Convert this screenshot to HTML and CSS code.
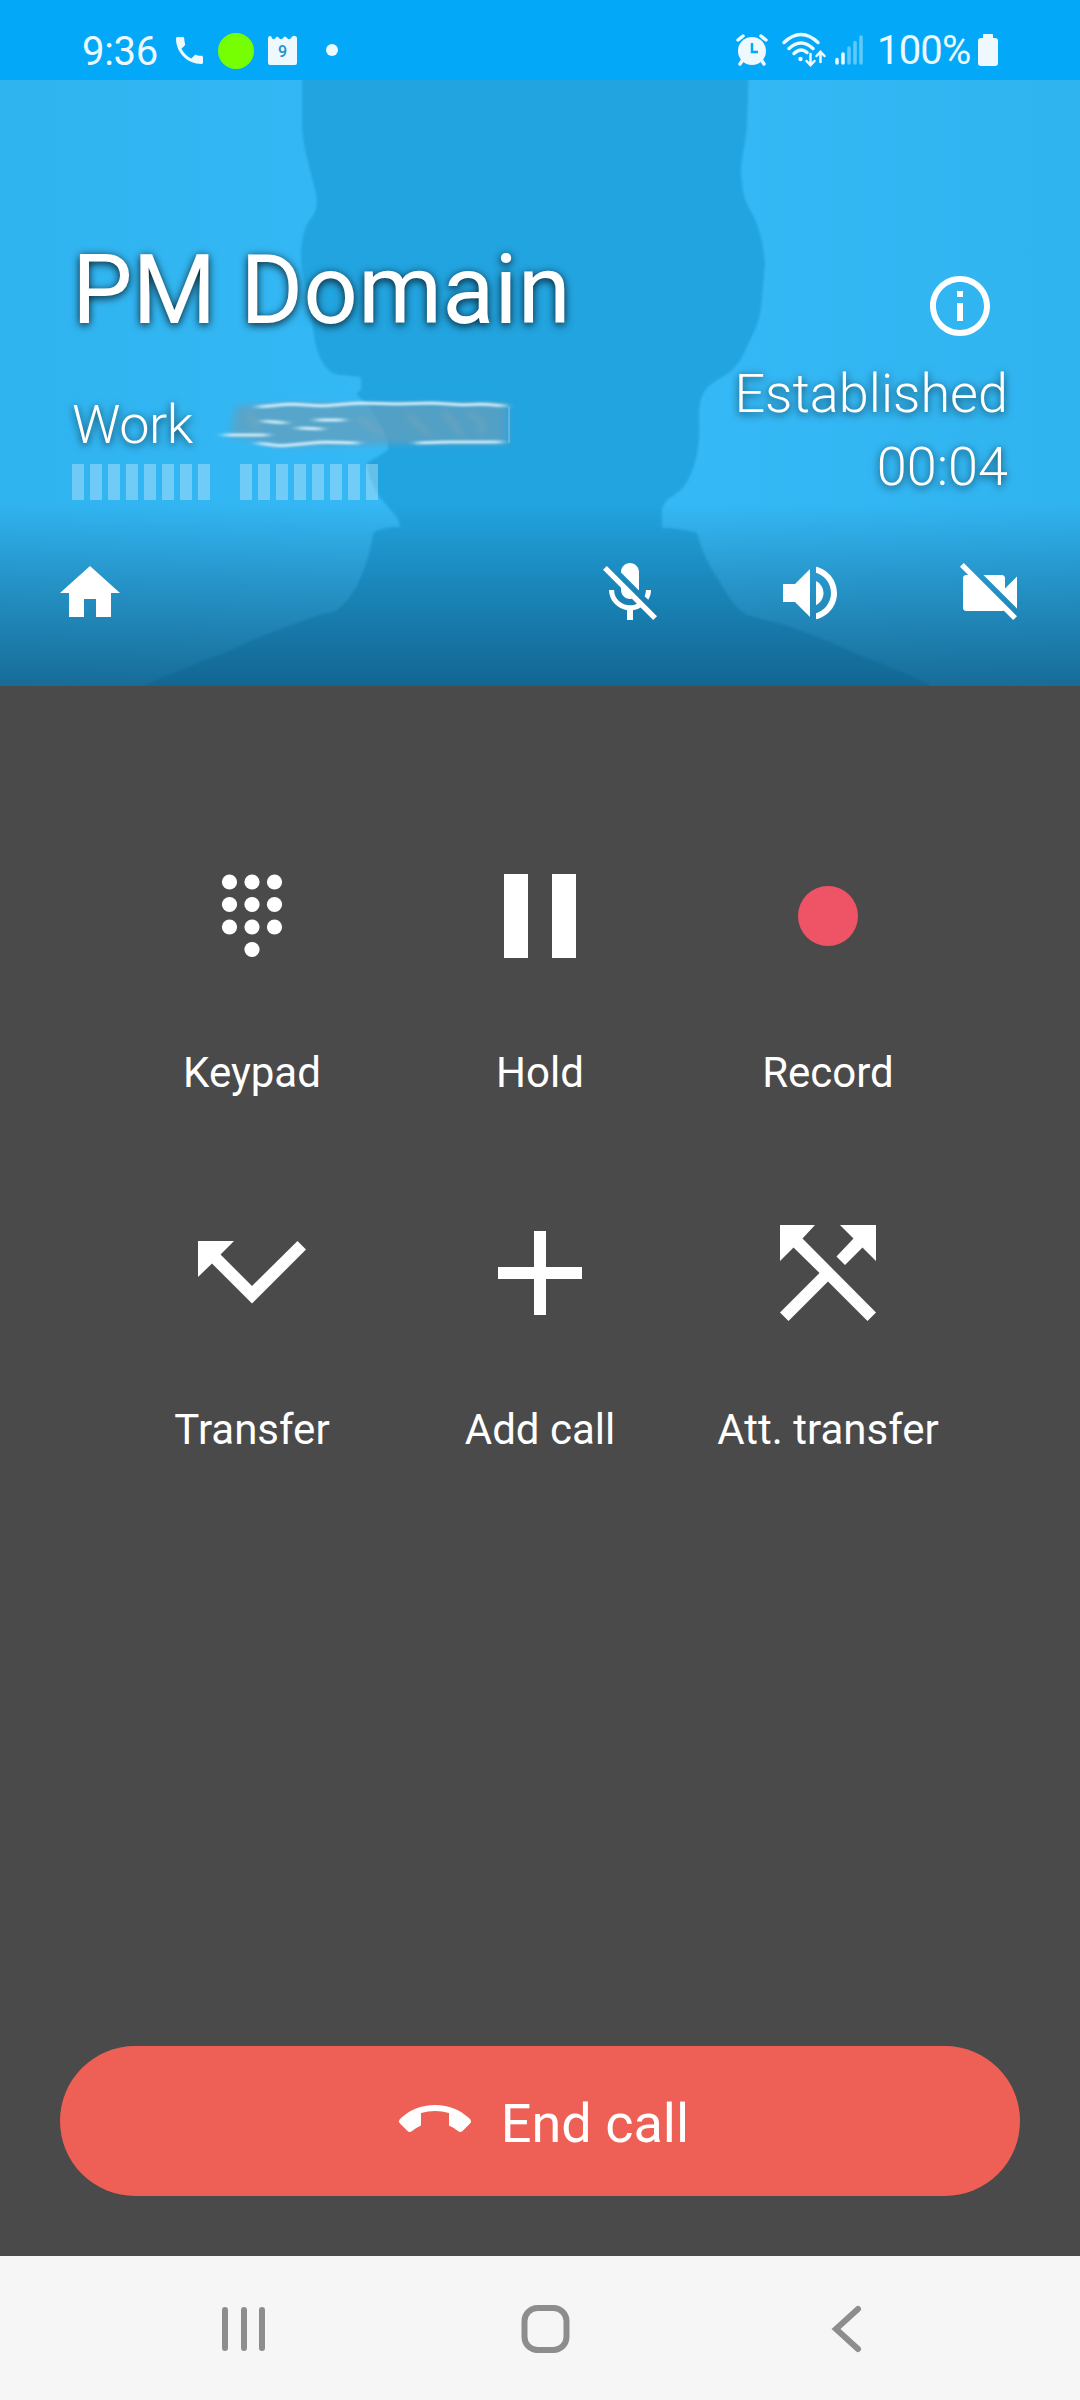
FILE: index.html
```html
<!DOCTYPE html>
<html lang="en">
<head>
<meta charset="utf-8">
<title>Call</title>
<link rel="stylesheet" href="styles.css">
</head>
<body>
<div class="phone">
  <header class="status">
    <span class="clock">9:36</span>
    <svg class="st-phone" viewBox="3 3 18 18"><path d="M6.620 10.790c1.440 2.830 3.760 5.140 6.590 6.590l2.200-2.200c.27-.27.67-.36 1.020-.24 1.120.37 2.330.57 3.570.57.55 0 1 .45 1 1V20c0 .55-.45 1-1 1-9.390 0-17-7.610-17-17 0-.55.45-1 1-1h3.500c.55 0 1 .45 1 1 0 1.250.2 2.450.57 3.570.11.35.030.74-.25 1.020l-2.200 2.200z"/></svg>
    <span class="st-green"></span>
    <span class="st-cal"><svg viewBox="0 0 29 29"><path d="M0 3Q0 0 2 0Q3.500 0 4 2Q5.500 4.500 7.500 2Q9 -1 11 2Q13 4.500 15 2Q17 -1 19 2Q21 4.500 23 2Q25 -1 27 0Q29 0 29 3V27Q29 29 27 29H2Q0 29 0 27Z"/></svg><b>9</b></span>
    <span class="st-dot"></span>
    <svg class="st-alarm" viewBox="0 0 32 32"><circle cx="16" cy="17" r="14"/><path class="line" d="M2 6L7 2M30 6L25 2M6 27L4 30M26 27L28 30"/><path class="hand" d="M16 9V18H22"/></svg>
    <svg class="st-wifi" viewBox="0 0 44 34"><path class="line" d="M2 9.500Q19-6.500 36 9.500M7 15.500Q19 4.500 31 15.500M12 20.500Q19 14 25 19.500"/><circle cx="18.500" cy="26" r="2.200"/><path class="arrow" d="M28.500 21V31.500M24.500 28L28.500 32.200L32.500 28M38.500 29V19.500M34.500 23L38.500 18.800L42.500 23"/></svg>
    <svg class="st-signal" viewBox="0 0 28 30"><path d="M2 24.500V28M8 19V28"/><path class="dim" d="M14 13V28M20 7.500V28M26 2V28"/></svg>
    <span class="battery">100%</span>
    <svg class="st-batt" viewBox="0 0 20 32"><path d="M5 1Q5 0 6 0H14Q15 0 15 1V4H17Q20 4 20 7V29Q20 32 17 32H3Q0 32 0 29V7Q0 4 3 4H5Z"/></svg>
  </header>

  <section class="hero">
    <svg class="silhouette" viewBox="0 80 1080 606"><defs><filter id="edge" x="0" y="0" width="100%" height="100%"><feGaussianBlur stdDeviation="0.900"/></filter></defs><path filter="url(#edge)" d="M302 70V121C302 145 308 160 312 178Q317 195 317 203C316 216 308 220 305 229Q301 241 301 256C301 275 307 289 310 305Q313 328 315 342C319 360 327 374 341 375Q350 376 361 377V390L356 394C376 410 390 440 388 450L367 463Q368 475 374 487C380 500 388 506 394 514Q399 518 400 527Q385 527 376 531L373 534Q370 555 362 574C355 592 346 604 334 612Q318 614 303 621Q265 633 227 652Q184 668 145 685V696H930V685Q896 668 861 656Q823 638 785 625Q765 620 747 615C735 608 727 595 720 582Q704 560 697 533Q680 528 662 528V509Q664 503 668 499C676 494 685 488 689 478Q696 463 698 448Q700 435 699 411Q700 397 706 389C714 380 724 377 730 372Q742 361 747 346Q758 326 761 309Q763 287 765 264Q763 241 758 227C754 214 746 206 744 195Q741 183 741 170C742 152 747 138 747 121L749 70Z"/></svg>
    <div class="summary">
      <div class="left">
        <h1>PM Domain</h1>
        <div class="number"><span>Work</span>
          <svg class="smudge" viewBox="0 0 300 60"><defs><filter id="soft" x="-10%" y="-30%" width="120%" height="160%"><feGaussianBlur stdDeviation="4 3"/></filter><filter id="fine" x="-10%" y="-50%" width="120%" height="200%"><feGaussianBlur stdDeviation="5 1.200"/></filter><filter id="wide" x="-50%" y="-50%" width="200%" height="200%"><feGaussianBlur stdDeviation="3"/></filter></defs><path class="haze" filter="url(#soft)" d="M18 12L60 9H289V50H190L60 53L30 45L12 44Z"/><g class="streaks"><path filter="url(#fine)" d="M40 13L72 10L105 12L140 9L180 10L215 9L245 11L265 10L287 12M6 41H50M45 27L68 29M80 34L104 35M98 26L126 26M40 49L62 52L105 48L140 49M198 49L230 48L284 48"/><path class="faint" filter="url(#wide)" d="M225 16L245 42M190 20L212 42M250 20Q270 28 262 40M30 18L40 36M140 24L165 40"/><path class="side" d="M291 13V49"/></g></svg>
        </div>
        <div class="meters"><div class="meter"></div><div class="meter"></div></div>
      </div>
      <div class="right">
        <svg class="info" viewBox="2 2 20 20"><path d="M11 7h2v2h-2zm0 4h2v6h-2zm1-9C6.480 2 2 6.480 2 12s4.480 10 10 10 10-4.480 10-10S17.520 2 12 2zm0 18c-4.410 0-8-3.590-8-8s3.590-8 8-8 8 3.590 8 8-3.590 8-8 8z"/></svg>
        <div>Established</div>
        <div>00:04</div>
      </div>
    </div>
    <nav class="tools">
      <svg class="home" viewBox="0 0 24 24"><path d="M10 20v-6h4v6h5v-8h3L12 3 2 12h3v8z"/></svg>
      <svg viewBox="0 0 24 24"><path d="M19 11h-1.700c0 .74-.16 1.430-.43 2.050l1.230 1.230c.56-.98.9-2.090.9-3.280zm-4.020.17c0-.06.020-.11.020-.17V5c0-1.660-1.340-3-3-3S9 3.340 9 5v.18l5.980 5.990zM4.270 3L3 4.270l6.010 6.010V11c0 1.660 1.330 3 2.990 3 .22 0 .44-.030.65-.080l1.660 1.660c-.71.33-1.500.52-2.310.52-2.760 0-5.300-2.100-5.300-5.100H5c0 3.410 2.720 6.230 6 6.720V21h2v-3.280c.91-.13 1.770-.45 2.540-.9L19.730 21 21 19.730 4.270 3z"/></svg>
      <svg viewBox="0 0 24 24"><path d="M3 9v6h4l5 5V4L7 9H3zm13.500 3c0-1.770-1.020-3.290-2.500-4.030v8.050c1.480-.73 2.500-2.250 2.500-4.020zM14 3.230v2.060c2.890.86 5 3.540 5 6.710s-2.110 5.850-5 6.710v2.060c4.010-.91 7-4.490 7-8.770s-2.990-7.860-7-8.770z"/></svg>
      <svg viewBox="0 0 24 24"><path d="M21 6.500l-4 4V7c0-.55-.45-1-1-1H9.820L21 17.180V6.500zM3.270 2L2 3.270 4.730 6H4c-.55 0-1 .45-1 1v10c0 .55.45 1 1 1h12c.21 0 .39-.080.54-.18L19.730 21 21 19.730 3.270 2z"/></svg>
    </nav>
  </section>

  <main class="actions">
    <div class="action"><svg viewBox="0 0 120 120"><g><circle cx="37.500" cy="26" r="7.600"/><circle cx="60" cy="26" r="7.600"/><circle cx="82.500" cy="26" r="7.600"/><circle cx="37.500" cy="48.500" r="7.600"/><circle cx="60" cy="48.500" r="7.600"/><circle cx="82.500" cy="48.500" r="7.600"/><circle cx="37.500" cy="71" r="7.600"/><circle cx="60" cy="71" r="7.600"/><circle cx="82.500" cy="71" r="7.600"/><circle cx="60" cy="93.500" r="7.600"/></g></svg><span>Keypad</span></div>
    <div class="action"><svg viewBox="0 0 120 120"><path d="M24 18H48V102H24ZM72 18H96V102H72Z"/></svg><span>Hold</span></div>
    <div class="action"><svg viewBox="0 0 120 120"><circle class="rec" cx="60" cy="60" r="30"/></svg><span>Record</span></div>
    <div class="action"><svg viewBox="0 0 120 120"><path d="M6 28H42L28.500 41.500L60 73L105.500 28L114 36.500L60 90.500L20 50.500L6 64Z"/></svg><span>Transfer</span></div>
    <div class="action"><svg viewBox="0 0 120 120"><path d="M54 18H66V54H102V66H66V102H54V66H18V54H54Z"/></svg><span>Add call</span></div>
    <div class="action"><svg viewBox="0 0 120 120"><path d="M12 12H47L34.500 25.500L108 99.500L99.500 108L60 68.500L20.500 108L12 99.500L51.500 60L25.500 34.500L12 48ZM72 12H108V48L94.500 34.500L77 52L68.500 43.500L85.500 25.500Z"/></svg><span>Att. transfer</span></div>
  </main>

  <footer class="end-area">
    <button class="end"><svg viewBox="0 0 72 28"><path d="M36 0C50 0 61 5 70 13Q73.500 16 71 18.500L63.500 26Q61.500 28 59 26Q54.500 22.500 50 20.500V8Q36 4 22 8V20.500Q17.500 22.500 13 26Q10.500 28 8.500 26L1 18.500Q-1.500 16 2 13C11 5 22 0 36 0Z"/></svg><span>End call</span></button>
  </footer>

  <nav class="system">
    <svg viewBox="0 0 48 48"><path d="M5 5V43M24 5V43M42 5V43"/></svg>
    <svg viewBox="0 0 48 48"><rect x="2.500" y="3" width="42" height="42" rx="13"/></svg>
    <svg viewBox="0 0 48 48"><path d="M35 4L13 24L35 44"/></svg>
  </nav>
</div>
</body>
</html>
```

FILE: styles.css
```css
* { box-sizing: border-box; }
body { margin: 0; font-family: Roboto, sans-serif; color: #fff; }
svg { display: block; flex: none; fill: currentColor; overflow: visible; }
.phone { width: 1080px; height: 2400px; display: flex; flex-direction: column; background: #4a4a4a; }

.status { height: 80px; background: #03a9f8; display: flex; align-items: center; padding: 20px 82px 0 82px; color: #edf8ff; line-height: 1; }
.clock { width: 78px; font-size: 40px; margin-right: 16px; padding-top: 4px; letter-spacing: -.3px; }
.st-phone { width: 27px; height: 27px; margin-right: 15px; }
.st-green { width: 36px; height: 36px; border-radius: 50%; background: #76ff03; margin: 1px 14px 0 0; }
.st-cal { display: grid; place-items: center; width: 29px; height: 29px; margin-right: 29px; }
.st-cal > * { grid-area: 1 / 1; }
.st-cal svg { width: 29px; height: 29px; }
.st-cal b { color: #1793d0; font-size: 16px; font-weight: 500; padding-top: 4px; }
.st-dot { width: 12px; height: 12px; border-radius: 50%; background: currentColor; margin-right: auto; }
.st-alarm { width: 32px; height: 32px; margin-right: 14px; }
.line, .hand, .arrow { fill: none; stroke: currentColor; stroke-width: 3.500; stroke-linecap: round; }
.hand { stroke: #03a9f8; stroke-width: 2.500; stroke-linecap: butt; }
.arrow { stroke-width: 2.500; }
.st-wifi { width: 44px; height: 34px; margin-right: 9px; }
.st-signal { width: 28px; height: 30px; stroke: currentColor; stroke-width: 3.500; stroke-linecap: round; margin-right: 14px; }
.dim { opacity: .4; }
.battery { width: 98px; font-size: 40px; letter-spacing: -.8px; margin-right: 3px; padding-top: 1px; }
.st-batt { width: 20px; height: 32px; }

.hero { height: 606px; display: grid; grid-template-rows: 415px 191px; background: linear-gradient(90deg, #30b4f0, #35b9f6 38%, #35b9f6 65%, #30b4f0); overflow: hidden; }
.silhouette { grid-area: 1 / 1 / 3 / 2; width: 1080px; height: 606px; fill: #21a4e0; }
.summary { grid-area: 1 / 1; z-index: 1; display: flex; justify-content: space-between; padding: 0 72px; }
.left { padding-top: 154px; }
h1 { margin: 0; font-size: 96px; line-height: 113px; font-weight: 400; text-shadow: 0 2px 9px rgba(0,0,0,.85); }
.number { display: flex; margin-top: 46px; height: 63px; font-size: 54px; line-height: 63px; font-weight: 300; text-shadow: 0 2px 9px rgba(0,0,0,.7); }
.number span { width: 120px; letter-spacing: -.4px; }
.smudge { width: 300px; height: 60px; margin: 1px 0 0 26px; }
.haze { fill: #649fbd; opacity: .75; }
.streaks { fill: none; stroke: #d4edf8; stroke-width: 3; }
.faint { stroke: #8fa9b8; stroke-width: 6; opacity: .35; }
.side { stroke: #8fc2dc; stroke-width: 2; opacity: .5; }
.meters { display: flex; gap: 30px; margin-top: 8px; }
.meter { width: 138px; height: 36px; background: repeating-linear-gradient(90deg, rgba(255,255,255,.3) 0 12px, transparent 12px 18px); }
.right { display: flex; flex-direction: column; align-items: flex-end; padding-top: 196px; font-size: 54px; font-weight: 300; line-height: 73px; text-shadow: 0 2px 9px rgba(0,0,0,.7); }
.info { width: 60px; height: 60px; margin: 0 18px 21px 0; }
.tools { grid-area: 2 / 1; z-index: 1; display: flex; align-items: center; gap: 108px; padding: 5px 54px 0; background: linear-gradient(rgba(10,70,105,0) 4%, rgba(10,70,105,.3) 45%, rgba(10,70,105,.66)); }
.tools svg { width: 72px; height: 72px; }
.home { margin-right: auto; }

.actions { display: grid; grid-template-columns: repeat(3, 288px); grid-auto-rows: 357px; justify-content: center; padding-top: 170px; flex: 1; align-content: start; }
.action { display: flex; flex-direction: column; align-items: center; gap: 72px; font-size: 42px; line-height: 50px; white-space: nowrap; }
.action svg { width: 120px; height: 120px; }
.rec { fill: #ef5366; }

.end-area { height: 210px; padding: 0 60px; }
.end { width: 960px; height: 150px; border: 0; border-radius: 75px; background: #ee5f55; color: #fff; font: 54px Roboto, sans-serif; display: flex; align-items: center; justify-content: center; gap: 30px; padding: 4px 0 0 8px; }
.end svg { width: 72px; height: 28px; margin-top: -8px; }

.system { height: 144px; background: #f6f6f6; display: flex; justify-content: space-between; align-items: center; padding: 2px 209px 0 220px; }
.system svg { width: 48px; height: 48px; fill: none; stroke: #8d8d8d; stroke-width: 6; stroke-linecap: round; }
```
